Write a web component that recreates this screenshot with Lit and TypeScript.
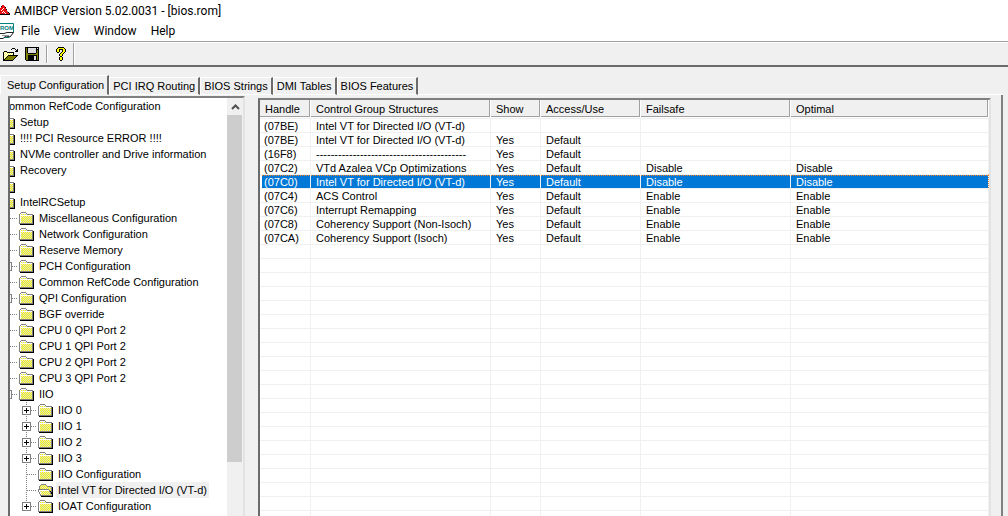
import { LitElement, html, svg, css, nothing } from "lit";
import { customElement, property, state } from "lit/decorators.js";
import { classMap } from "lit/directives/class-map.js";

const PALETTE: Record<string, string> = {
  K: "#000000",
  G: "#808080",
  Y: "#ffff00",
  y: "#ffff66",
  W: "#ffffff",
  L: "#dcdcdc",
  O: "#808000",
  R: "#e81010",
  T: "#008080",
};

/* Draws a bitmap given as rows of palette letters; D alternates yellow and light grey. */
const bitmap = (rows: string[], width: number, height: number, dx = 0, dy = 0) => svg`
  <svg width=${width} height=${height} viewBox="0 0 ${width} ${height}" shape-rendering="crispEdges" aria-hidden="true">
    ${rows.flatMap((row, y) =>
      [...row].map((c, x) => {
        if (c === ".") return nothing;
        const fill = c === "D" ? ((x + y) % 2 ? "#d8d8d0" : "#ffff00") : PALETTE[c];
        return svg`<rect x=${x + dx} y=${y + dy} width="1" height="1" fill=${fill}></rect>`;
      })
    )}
  </svg>`;

const FOLDER = [
  "..GGGGG........",
  ".GWWWWWG.......",
  "GWDDDDDDGGGGGG.",
  "GWWWWWWWWWWWWGK",
  "GWDDDDDDDDDDDGK",
  "GWDDDDDDDDDDDGK",
  "GWDDDDDDDDDDDGK",
  "GWDDDDDDDDDDDGK",
  "GWDDDDDDDDDDDGK",
  "GWDDDDDDDDDDDGK",
  "GWDDDDDDDDDDDGK",
  "GGGGGGGGGGGGGGK",
  ".KKKKKKKKKKKKKK",
];

const FOLDER_OPEN = [
  "...GGGGG.......",
  "..GDDDDDG......",
  ".GDDDDDDDGGGGG.",
  ".GDDDDDDDDDDDGK",
  ".GDDDDDDDDDDDGK",
  "GGGGGGGGGGGDDGK",
  "GWWWWWWWWWWGDGK",
  "GWDDDDDDDDDGKGK",
  ".GWDDDDDDDDDGKK",
  ".GWDDDDDDDDDGKK",
  "..GWDDDDDDDDDGK",
  "..GGGGGGGGGGGGK",
  "...KKKKKKKKKKKK",
];

const OPEN = [
  "..........KKK...",
  ".........K...K.K",
  "..............KK",
  "..KKK........KKK",
  ".KyWyKKKKKKK....",
  ".KWyWyWyWyWK....",
  ".KyWyWyWyWyK....",
  ".KWyWyKKKKKKKKKK",
  ".KyWyKOOOOOOOOK.",
  ".KWyKOOOOOOOOK..",
  ".KyKOOOOOOOOK...",
  ".KKOOOOOOOOK....",
  ".KKKKKKKKKK.....",
];

const SAVE = [
  "KKKKKKKKKKKKKK",
  "KOKLLLLLLLLKLK",
  "KOKLLLLLLLLKKK",
  "KOKLLLLLLLLKOK",
  "KOKLLLLLLLLKOK",
  "KOKLLLLLLLLKOK",
  "KOOKKKKKKKKOOK",
  "KOOOOOOOOOOOOK",
  "KOOKKKKKKKKKOK",
  "KOOKKKKKKLLKOK",
  "KOOKKKKKKLLKOK",
  "KOOKKKKKKLLKOK",
  "KOOKKKKKKLLKOK",
  ".KKKKKKKKKKKKK",
];

const HELP = [
  "..KKKKKK..",
  ".KYYYYYYK.",
  "KYYKKKKYYK",
  "KYYK..KYYK",
  "KYYK..KYYK",
  ".KK..KYYK.",
  "....KYYK..",
  "...KYYK...",
  "...KYYK...",
  "....KK....",
  "...KYYK...",
  "...KYYK...",
  "...KYYK...",
  "....KK....",
];

const APP = [
  "..RR......",
  ".KRRR.....",
  ".RRRRK....",
  "RRRWRR....",
  "RRWRRRK...",
  "RWRRRRR...",
  "RRRWRRRGW.",
  "RRWRWRRRKW",
  "RRRRRWRRRK",
  "KKKKKKKKKK",
];

type Expander = "" | "line" | "plus" | "box";
interface Node {
  label: string;
  level: number;
  icon?: boolean;
  expander?: Expander;
}

const leaf = (label: string, level: number, expander: Expander = "line"): Node => ({
  label,
  level,
  icon: true,
  expander,
});

const TREE: Node[] = [
  { label: "Common RefCode Configuration", level: 0, icon: true, expander: "" },
  leaf("Setup", 1),
  leaf("!!!! PCI Resource ERROR !!!!", 1),
  leaf("NVMe controller and Drive information", 1),
  leaf("Recovery", 1),
  leaf("", 1),
  leaf("IntelRCSetup", 1),
  leaf("Miscellaneous Configuration", 2),
  leaf("Network Configuration", 2),
  leaf("Reserve Memory", 2),
  leaf("PCH Configuration", 2, "box"),
  leaf("Common RefCode Configuration", 2),
  leaf("QPI Configuration", 2, "box"),
  leaf("BGF override", 2),
  leaf("CPU 0 QPI Port 2", 2),
  leaf("CPU 1 QPI Port 2", 2),
  leaf("CPU 2 QPI Port 2", 2),
  leaf("CPU 3 QPI Port 2", 2),
  leaf("IIO", 2, "box"),
  leaf("IIO 0", 3, "plus"),
  leaf("IIO 1", 3, "plus"),
  leaf("IIO 2", 3, "plus"),
  leaf("IIO 3", 3, "plus"),
  leaf("IIO Configuration", 3),
  leaf("Intel VT for Directed I/O (VT-d)", 3),
  leaf("IOAT Configuration", 3, "plus"),
];

const COLUMNS = ["Handle", "Control Group Structures", "Show", "Access/Use", "Failsafe", "Optimal"];
const VTD = "Intel VT for Directed I/O (VT-d)";
const ROWS = [
  ["(07BE)", VTD, "", "", "", ""],
  ["(07BE)", VTD, "Yes", "Default", "", ""],
  ["(16F8)", "-".repeat(41), "Yes", "Default", "", ""],
  ["(07C2)", "VTd Azalea VCp Optimizations", "Yes", "Default", "Disable", "Disable"],
  ["(07C0)", VTD, "Yes", "Default", "Disable", "Disable"],
  ["(07C4)", "ACS Control", "Yes", "Default", "Enable", "Enable"],
  ["(07C6)", "Interrupt Remapping", "Yes", "Default", "Enable", "Enable"],
  ["(07C8)", "Coherency Support (Non-Isoch)", "Yes", "Default", "Enable", "Enable"],
  ["(07CA)", "Coherency Support (Isoch)", "Yes", "Default", "Enable", "Enable"],
];
const SPARE_ROWS = 40;

@customElement("setup-tree")
class SetupTree extends LitElement {
  @state() private selected = 24;

  static styles = css`
    :host {
      display: flex;
      flex: 1;
      min-width: 0;
      min-height: 0;
    }
    .tree {
      flex: 1;
      min-width: 0;
      overflow: hidden;
      background: #fff;
    }
    .nodes {
      margin-left: -49px;
    }
    .node {
      display: flex;
      height: 16px;
    }
    .indent,
    .expander,
    .icon {
      flex: none;
      width: 19px;
      height: 16px;
    }
    svg {
      display: block;
    }
    .label {
      border: 0;
      margin: 0;
      padding: 0 2px;
      background: none;
      color: #000;
      font: inherit;
      line-height: 16px;
      white-space: nowrap;
    }
    .label.selected {
      background: #f0f0f0;
    }
    .scroll {
      flex: none;
      width: 16px;
      display: flex;
      flex-direction: column;
      background: #f0f0f0;
    }
    .arrow {
      border: 0;
      padding: 0;
      height: 17px;
      background: none;
      display: grid;
      place-items: center;
    }
    .thumb {
      height: 83%;
      width: 15px;
      background: #cdcdcd;
    }
  `;

  private expander(node: Node, index: number) {
    const boxed = node.expander === "plus" || node.expander === "box";
    const last = TREE[index + 1] === undefined;
    return svg`<svg class="expander" width="19" height="16" shape-rendering="crispEdges" aria-hidden="true">
      <line x1="8.5" y1="0" x2="8.5" y2=${last ? 8 : 16} stroke="#808080" stroke-dasharray="1 1"></line>
      <line x1="9" y1="8.5" x2="19" y2="8.5" stroke="#808080" stroke-dasharray="1 1"></line>
      ${boxed
        ? svg`<rect x="4.5" y="4.5" width="8" height="8" fill="#fff" stroke="#808080"></rect>
            <path d="M6 8.5H11${node.expander === "plus" ? "M8.5 6V11" : ""}" stroke="#000"></path>`
        : nothing}
    </svg>`;
  }

  render() {
    return html`
      <div class="tree" role="tree">
        <div class="nodes">
          ${TREE.map(
            (node, i) => html`<div class="node" role="treeitem" aria-selected=${i === this.selected}>
              ${Array.from({ length: node.level }, () => html`<span class="indent"></span>`)}
              ${node.expander ? this.expander(node, i) : html`<span class="indent"></span>`}
              <span class="icon">${bitmap(i === this.selected ? FOLDER_OPEN : FOLDER, 19, 16, 1, 2)}</span>
              ${node.label
                ? html`<button
                    class=${classMap({ label: true, selected: i === this.selected })}
                    @click=${() => (this.selected = i)}
                  >${node.label}</button>`
                : nothing}
            </div>`
          )}
        </div>
      </div>
      <div class="scroll">
        <button class="arrow" aria-label="Scroll up">
          <svg width="9" height="6"><path d="M1 5L4.500 1.500L8 5" fill="none" stroke="#505050" stroke-width="2"></path></svg>
        </button>
        <div class="thumb"></div>
      </div>
    `;
  }
}

@customElement("control-list")
class ControlList extends LitElement {
  @property({ type: Number }) selected = 4;

  static styles = css`
    :host {
      display: block;
      flex: 1;
      min-width: 0;
      overflow: hidden;
      background: #fff;
    }
    table {
      width: 100%;
      table-layout: fixed;
      border-collapse: separate;
      border-spacing: 0;
    }
    .c0 { width: 51px; }
    .c1 { width: 180px; }
    .c2 { width: 50px; }
    .c3 { width: 100px; }
    .c4 { width: 150px; }
    th {
      height: 18px;
      padding: 0;
      font-weight: normal;
      text-align: left;
    }
    .head {
      height: 16px;
      line-height: 19px;
      margin-bottom: 1px;
      padding-left: 5px;
      background: #f0f0f0;
      border-right: 1px solid #a0a0a0;
      border-bottom: 1px solid #a0a0a0;
      box-shadow: 1px 0 #fff;
      margin-right: 1px;
      white-space: nowrap;
      overflow: hidden;
    }
    td {
      box-sizing: border-box;
      height: 14px;
      padding: 2px 0 0 5px;
      border-top: 1px solid #f0f0f0;
      border-right: 1px solid #f0f0f0;
      line-height: 11px;
      white-space: nowrap;
      overflow: hidden;
    }
    td:first-child {
      padding-left: 4px;
    }
    .selected td {
      color: #fff;
      background: repeating-linear-gradient(90deg, #f08020 0 1px, #0078d7 1px 2px) 0 0 / 100% 1px no-repeat #0078d7;
      background-clip: padding-box;
    }
    .selected td:first-child {
      box-shadow: inset 2px 0 #fff;
    }
    .selected td:last-child {
      border-right: 1px dotted #e08030;
    }
  `;

  render() {
    return html`<table>
      <colgroup>
        ${COLUMNS.map((_, i) => html`<col class="c${i}" />`)}
      </colgroup>
      <thead>
        <tr>${COLUMNS.map((c) => html`<th scope="col"><div class="head">${c}</div></th>`)}</tr>
      </thead>
      <tbody>
        ${ROWS.map(
          (row, i) => html`<tr
            class=${classMap({ selected: i === this.selected })}
            @click=${() => (this.selected = i)}
          >${row.map((cell) => html`<td>${cell}</td>`)}</tr>`
        )}
        ${Array.from(
          { length: SPARE_ROWS },
          () => html`<tr aria-hidden="true">${COLUMNS.map(() => html`<td></td>`)}</tr>`
        )}
      </tbody>
    </table>`;
  }
}

@customElement("app-root")
class AppRoot extends LitElement {
  @state() private tab = 0;

  static styles = css`
    :host {
      display: flex;
      flex-direction: column;
      height: 100vh;
      overflow: hidden;
      background: #f0f0f0;
      color: #000;
      font: 11px "Liberation Sans", Arial, sans-serif;
    }
    button {
      border: 0;
      margin: 0;
      padding: 0;
      background: none;
      color: inherit;
      font: inherit;
      white-space: nowrap;
    }
    svg {
      display: block;
    }
    .title,
    .menu {
      flex: none;
      display: flex;
      align-items: center;
      background: #fff;
      font-family: Roboto, "Open Sans", sans-serif;
      font-size: 12px;
    }
    .title {
      height: 21px;
      gap: 4px;
    }
    .menu {
      height: 20px;
      gap: 14px;
      border-bottom: 1px solid #a0a0a0;
    }
    .rom {
      margin-right: -7px;
    }
    .rom text {
      font: bold 6px "Liberation Sans", Arial, sans-serif;
      fill: #008080;
    }
    .toolbar {
      flex: none;
      display: flex;
      align-items: center;
      height: 22px;
      border-top: 1px solid #fff;
      border-bottom: 2px solid #6b6b6b;
    }
    .tool {
      display: grid;
      place-items: center;
      width: 21px;
      height: 22px;
    }
    .tool.help {
      width: 25px;
    }
    .rule {
      width: 1px;
      height: 18px;
      margin-left: 4px;
      background: #a0a0a0;
      border-right: 1px solid #fff;
    }
    .rule.full {
      height: 22px;
      margin-left: 0;
    }
    .tabs {
      flex: none;
      display: flex;
      align-items: flex-end;
      height: 20px;
      margin-top: 8px;
    }
    .tab {
      height: 18px;
      line-height: 17px;
      padding: 0 3px;
      border-top: 1px solid #fff;
      border-left: 1px solid #fff;
      border-right: 2px solid #6b6b6b;
      border-bottom: 1px solid #fff;
    }
    .tab:first-child {
      padding: 0 3px 0 6px;
    }
    .tab.active {
      height: 20px;
      border-bottom-color: #f0f0f0;
    }
    .rest {
      flex: 1;
      height: 1px;
      background: #fff;
      margin-right: 6px;
    }
    .page {
      flex: 1;
      min-height: 0;
      display: grid;
      grid-template-columns: 237px minmax(0, 1fr);
      gap: 13px;
      padding: 1px 10px 0 8px;
      margin-right: 5px;
      border-right: 2px solid #808080;
      border-left: 0;
    }
    .pane {
      display: flex;
      min-height: 0;
      overflow: hidden;
      border: solid #a0a0a0;
      border-color: #808080 #e3e3e3 #fff #6b6b6b;
      border-width: 2px 2px 0 2px;
    }
    .pane.list {
      margin-top: 2px;
    }
  `;

  render() {
    const tabs = ["Setup Configuration", "PCI IRQ Routing", "BIOS Strings", "DMI Tables", "BIOS Features"];
    return html`
      <header class="title">${bitmap(APP, 10, 13, 0, 1)}<span>AMIBCP Version 5.02.0031 - [bios.rom]</span></header>
      <nav class="menu">
        <svg class="rom" width="14" height="18" aria-hidden="true">
          <path d="M0 1.500H13.500V10L9 15.500H0" fill="#fff" stroke="#008080"></path>
          <text x="0" y="8">ROM</text>
          <path d="M0 11.500H4L7 10.500H13.500L10 15L6 14L3 16.500H0" fill="#fff" stroke="#222"></path>
          <path d="M2 13.500H9" stroke="#999"></path>
        </svg>
        ${["File", "View", "Window", "Help"].map((m) => html`<button>${m}</button>`)}
      </nav>
      <div class="toolbar">
        <button class="tool" aria-label="Open">${bitmap(OPEN, 19, 14, 1, 1)}</button>
        <button class="tool" aria-label="Save">${bitmap(SAVE, 15, 14, 1)}</button>
        <span class="rule"></span>
        <button class="tool help" aria-label="Help">${bitmap(HELP, 11, 14, 1)}</button>
        <span class="rule full"></span>
      </div>
      <div class="tabs" role="tablist">
        ${tabs.map(
          (t, i) => html`<button
            role="tab"
            aria-selected=${i === this.tab}
            class=${classMap({ tab: true, active: i === this.tab })}
            @click=${() => (this.tab = i)}
          >${t}</button>`
        )}
        <span class="rest"></span>
      </div>
      <main class="page">
        <section class="pane"><setup-tree></setup-tree></section>
        <section class="pane list"><control-list></control-list></section>
      </main>
    `;
  }
}
